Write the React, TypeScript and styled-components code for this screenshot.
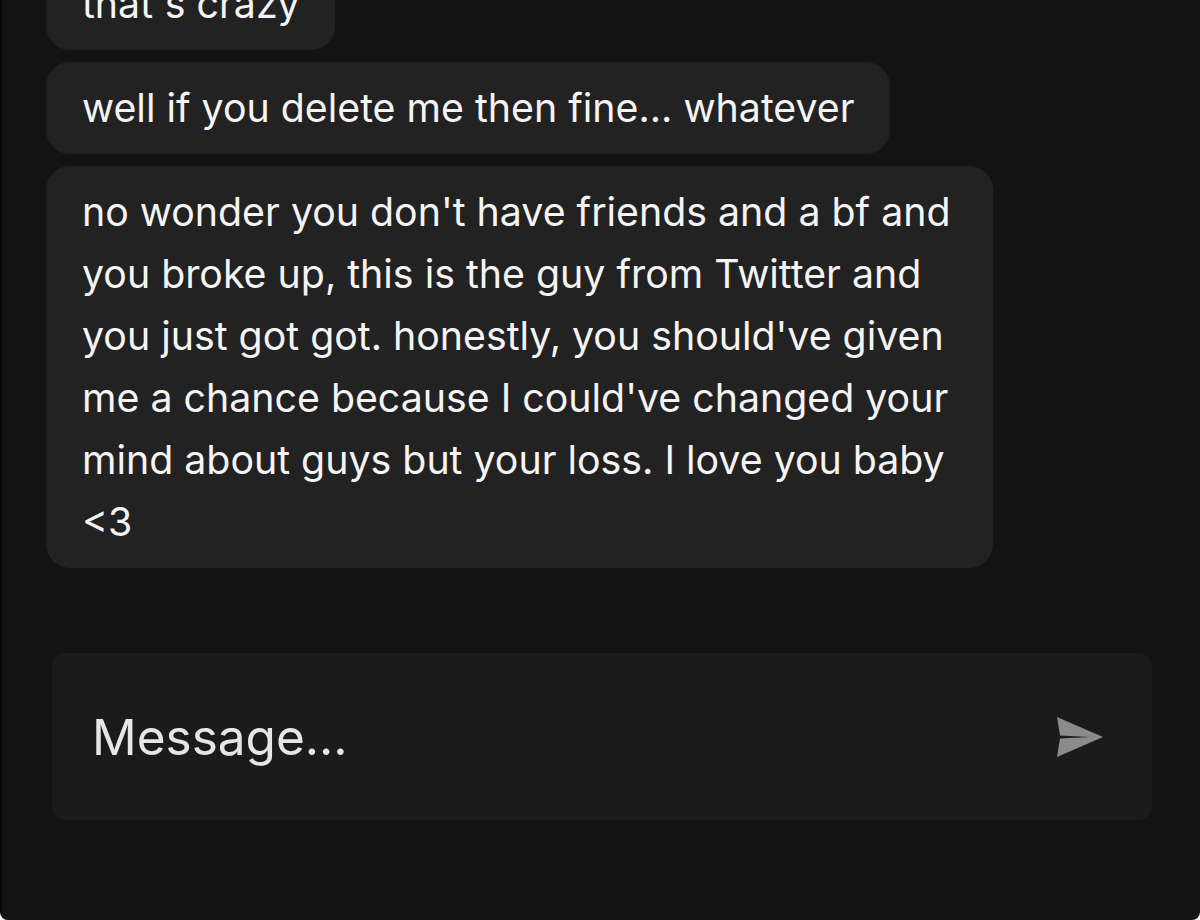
import React from "react";
import styled, { createGlobalStyle } from "styled-components";

const Global = createGlobalStyle`
  html, body { margin: 0; padding: 0; background: #ffffff; }
  body { font-family: Inter, "Liberation Sans", Arial, sans-serif; }
  * { box-sizing: border-box; }
`;

const Screen = styled.div`
  width: 1200px;
  height: 920px;
  background: #141314;
  border-left: 2px solid #060606;
  border-bottom-left-radius: 8px;
  border-bottom-right-radius: 8px;
  display: flex;
  flex-direction: column;
  overflow: hidden;
`;

const Thread = styled.div`
  flex: 1;
  min-height: 0;
  overflow: hidden;
  display: flex;
  flex-direction: column;
  justify-content: flex-end;
  align-items: flex-start;
  gap: 12px;
  padding: 0 0 85px 44px;
`;

const Bubble = styled.div`
  max-width: 947px;
  background: #232223;
  color: #f4f4f4;
  border-radius: 24px;
  padding: 15px 35px 15px 36px;
  font-size: 39.3px;
  line-height: 62px;
  letter-spacing: 0;
  flex-shrink: 0;
`;

const Composer = styled.div`
  height: 167px;
  margin: 0 48px 100px 50px;
  background: #1c1b1c;
  border-radius: 14px;
  box-shadow: 0 2px 0 #171314;
  display: flex;
  align-items: center;
  justify-content: space-between;
  padding: 0 48px 0 40px;
  flex-shrink: 0;
`;

const Placeholder = styled.span`
  color: #e6e6e6;
  font-size: 49.5px;
`;

const SendButton = styled.button`
  background: none;
  border: none;
  padding: 0;
  display: flex;
  cursor: pointer;
`;

const messages = [
  "that's crazy",
  "well if you delete me then fine... whatever",
  "no wonder you don't have friends and a bf and you broke up, this is the guy from Twitter and you just got got. honestly, you should've given me a chance because I could've changed your mind about guys but your loss. I love you baby <3",
];

export default function App() {
  return (
    <>
      <Global />
      <Screen>
        <Thread>
          {messages.map((m, i) => (
            <Bubble key={i}>{m}</Bubble>
          ))}
        </Thread>
        <Composer>
          <Placeholder>Message...</Placeholder>
          <SendButton aria-label="Send">
            <svg width="48" height="42" viewBox="0 0 48 42">
              <path d="M1 1 L47 21 L1 41 L4 22.5 L34 21 L4 19.5 Z" fill="#8c8b8c" />
            </svg>
          </SendButton>
        </Composer>
      </Screen>
    </>
  );
}
